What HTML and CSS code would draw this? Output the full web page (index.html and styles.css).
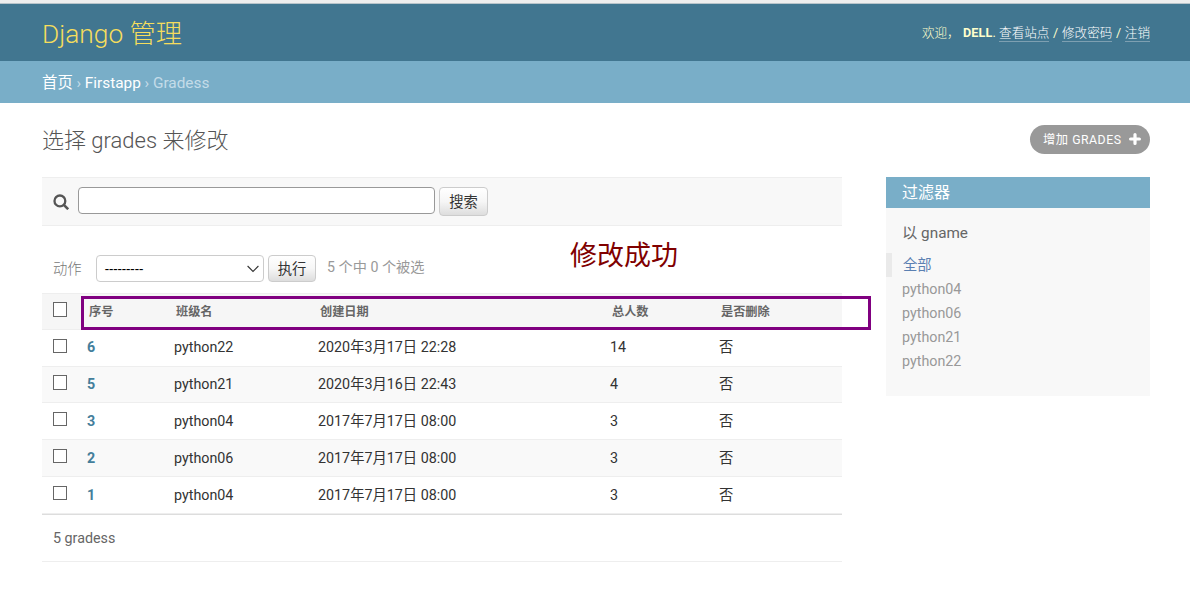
FILE: index.html
```html
<!DOCTYPE html>
<html lang="zh">
<head>
<meta charset="utf-8">
<title>选择 grades 来修改 | Django 管理</title>
<link rel="stylesheet" href="styles.css">
</head>
<body>
<header class="header">
  <h1 class="brand">Django 管理</h1>
  <div class="user-tools"><span class="welcome">欢迎，</span><strong>DELL</strong>.&nbsp;<a>查看站点</a><span class="slash">/</span><a>修改密码</a><span class="slash">/</span><a>注销</a></div>
</header>
<nav class="breadcrumbs"><a>首页</a><span class="sep">›</span><a class="app">Firstapp</a><span class="sep">›</span><span class="current">Gradess</span></nav>
<main class="content">
  <div class="title-row">
    <h2 class="title">选择 grades 来修改</h2>
    <a class="add-link"><span>增加 GRADES</span><svg class="plus" viewBox="0 0 12 12"><path d="M6 1.6v8.8M1.6 6h8.8" fill="none" stroke="#fff" stroke-width="3.2" stroke-linecap="round"/></svg></a>
  </div>
  <div class="columns">
    <section class="changelist">
      <div class="toolbar">
        <svg class="search-icon" viewBox="0 0 16 16"><circle cx="6.9" cy="6.9" r="5.4" fill="none" stroke="#555" stroke-width="2.3"/><path d="M10.8 10.8l4.4 4.4" stroke="#555" stroke-width="2.6"/></svg>
        <input class="search-input" type="text">
        <button class="button search-button">搜索</button>
      </div>
      <div class="actions">
        <span class="actions-label">动作</span>
        <div class="select"><span>---------</span><svg class="chevron" viewBox="0 0 12 8"><path d="M.6 1L6 6.5 11.4 1" fill="none" stroke="#333" stroke-width="1.1"/></svg></div>
        <button class="button go-button">执行</button>
        <span class="counter">5 个中 0 个被选</span>
        <div class="note">修改成功</div>
      </div>
      <div class="table">
        <div class="row head"><i class="check"></i><span>序号</span><span>班级名</span><span>创建日期</span><span>总人数</span><span>是否删除</span><div class="highlight"></div></div>
        <div class="row upper"><i class="check"></i><b>6</b><span>python22</span><span>2020年3月17日 22:28</span><span>14</span><span>否</span></div>
        <div class="row alt short upper"><i class="check"></i><b>5</b><span>python21</span><span>2020年3月16日 22:43</span><span>4</span><span>否</span></div>
        <div class="row"><i class="check"></i><b>3</b><span>python04</span><span>2017年7月17日 08:00</span><span>3</span><span>否</span></div>
        <div class="row alt"><i class="check"></i><b>2</b><span>python06</span><span>2017年7月17日 08:00</span><span>3</span><span>否</span></div>
        <div class="row"><i class="check"></i><b>1</b><span>python04</span><span>2017年7月17日 08:00</span><span>3</span><span>否</span></div>
      </div>
      <div class="paginator">5 gradess</div>
    </section>
    <aside class="filter">
      <h2 class="filter-title">过滤器</h2>
      <h3 class="filter-group">以 gname</h3>
      <ul class="filter-list">
        <li class="selected">全部</li>
        <li>python04</li>
        <li>python06</li>
        <li>python21</li>
        <li>python22</li>
      </ul>
    </aside>
  </div>
</main>
</body>
</html>
```
FILE: styles.css
```css
* { box-sizing: border-box; }
body {
  margin: 0;
  background: #fff;
  color: #333;
  font: 14.3px/20px Roboto, "Noto Sans CJK SC", sans-serif;
  border-top: 3px solid #eee;
  height: 605px;
  overflow: hidden;
}
h1, h2, h3, ul { margin: 0; padding: 0; font-weight: 400; }
.header {
  display: flex;
  align-items: center;
  justify-content: space-between;
  height: 58px;
  padding: 0 40px 0 42px;
  border-top: 1px solid #b8c4ca;
  background: #417690;
  color: #ffc;
}
.brand { font-size: 26.3px; line-height: 34px; font-weight: 300; color: #f5dd5d; margin-top: 3px; }
.user-tools { display: flex; font-size: 12.6px; line-height: 16px; margin-top: 1px; }
.user-tools a { color: #fff; border-bottom: 1px solid #7d9fb1; font-weight: 300; }
.welcome { width: 41px; font-weight: 300; }
.user-tools strong { letter-spacing: .2px; }
.slash { width: 12.5px; text-align: center; }
.breadcrumbs {
  display: flex;
  align-items: center;
  height: 42px;
  padding: 2px 42px 0;
  background: #79aec8;
  color: #c4dce8;
  font-size: 15.4px;
}
.breadcrumbs a { color: #fff; }
.sep { width: 12px; text-align: center; }
.content { padding: 0 40px 0 42px; }
.title-row { display: flex; justify-content: space-between; height: 74px; padding-top: 22px; }
.title { margin-top: 1px; font-size: 22px; line-height: 30px; font-weight: 300; color: #555; }
.add-link {
  display: flex;
  align-items: center;
  justify-content: space-between;
  width: 120px;
  height: 29px;
  padding: 0 9px 0 13px;
  border-radius: 15px;
  background: #999;
  color: #fff;
  font-size: 12.3px;
  font-weight: 400;
  letter-spacing: .5px;
}
.plus { width: 12px; height: 12px; margin-bottom: 1px; }
.columns { display: flex; justify-content: space-between; align-items: flex-start; }
.changelist { width: 800px; }
.toolbar {
  display: flex;
  height: 49px;
  padding: 9px 11px;
  border: solid #eee;
  border-width: 1px 0;
  background: #f8f8f8;
}
.search-icon { width: 16px; height: 16px; margin: 7px 9px 0 0; }
.search-input { width: 357px; height: 27px; padding: 0 6px; border: 1px solid #999; border-radius: 4px; background: #fff; }
.button {
  padding: 1px 0 0;
  border: 1px solid #ccc;
  border-radius: 4px;
  background: linear-gradient(#fff, #f6f6f6 50%, #ddd);
  color: #333;
  font: 14.3px/20px Roboto, "Noto Sans CJK SC", sans-serif;
}
.search-button { width: 49px; height: 29px; margin-left: 4px; }
.actions { position: relative; display: flex; height: 67px; padding: 29px 11px 0; color: #999; line-height: 26px; }
.actions-label { width: 43px; padding-top: 1px; font-weight: 300; color: #777; }
.select {
  display: flex;
  align-items: center;
  justify-content: space-between;
  width: 168px;
  height: 27px;
  padding: 0 4px 0 8px;
  border: 1px solid #ccc;
  border-radius: 4px;
  color: #000;
}
.select span { font-size: 14px; letter-spacing: .4px; }
.chevron { width: 12px; height: 8px; }
.go-button { width: 48px; height: 27px; margin-left: 4px; }
.counter { margin-left: 11px; line-height: 24px; font-size: 14.2px; }
.note { position: absolute; left: 528px; top: 10px; font-size: 27px; line-height: 40px; color: maroon; }
.row {
  position: relative;
  display: grid;
  grid-template-columns: 45px 87px 144px 292px 109px 1fr;
  height: 37px;
  border-bottom: 1px solid #eee;
  line-height: 36px;
}
.row b { color: #447e9b; }
.upper { line-height: 34px; }
.alt { background: #f9f9f9; }
.short { height: 36px; }
.head {
  border-top: 1px solid #eee;
  background: #f6f6f6;
  color: #666;
  font-size: 12.2px;
  font-weight: 700;
}
.head span { padding-left: 2px; }
.highlight { position: absolute; left: 39px; top: 2px; width: 790px; height: 34px; border: 3px solid purple; }
.check { width: 14px; height: 14px; margin: 9px 0 0 11px; border: 1px solid #666; background: #fff; }
.head .check { height: 15px; margin-top: 8px; }
.short .check { height: 15px; margin-top: 8px; }
.paginator {
  height: 48px;
  padding-left: 11px;
  border-top: 1px solid #ddd;
  border-bottom: 1px solid #eee;
  color: #666;
  line-height: 46px;
}
.filter { width: 264px; height: 219px; background: #f8f8f8; }
.filter-title { height: 31px; padding-left: 16px; background: #79aec8; color: #fff; font-size: 16px; line-height: 31px; }
.filter-group { height: 45px; padding: 15px 16px 0; color: #666; font-size: 15.3px; line-height: 20px; }
.filter-list { list-style: none; color: #999; line-height: 24px; }
.filter-list li { padding-left: 16px; }
.filter-list .selected { padding-left: 11px; border-left: 6px solid #eaeaea; color: #5b80b2; }
```
